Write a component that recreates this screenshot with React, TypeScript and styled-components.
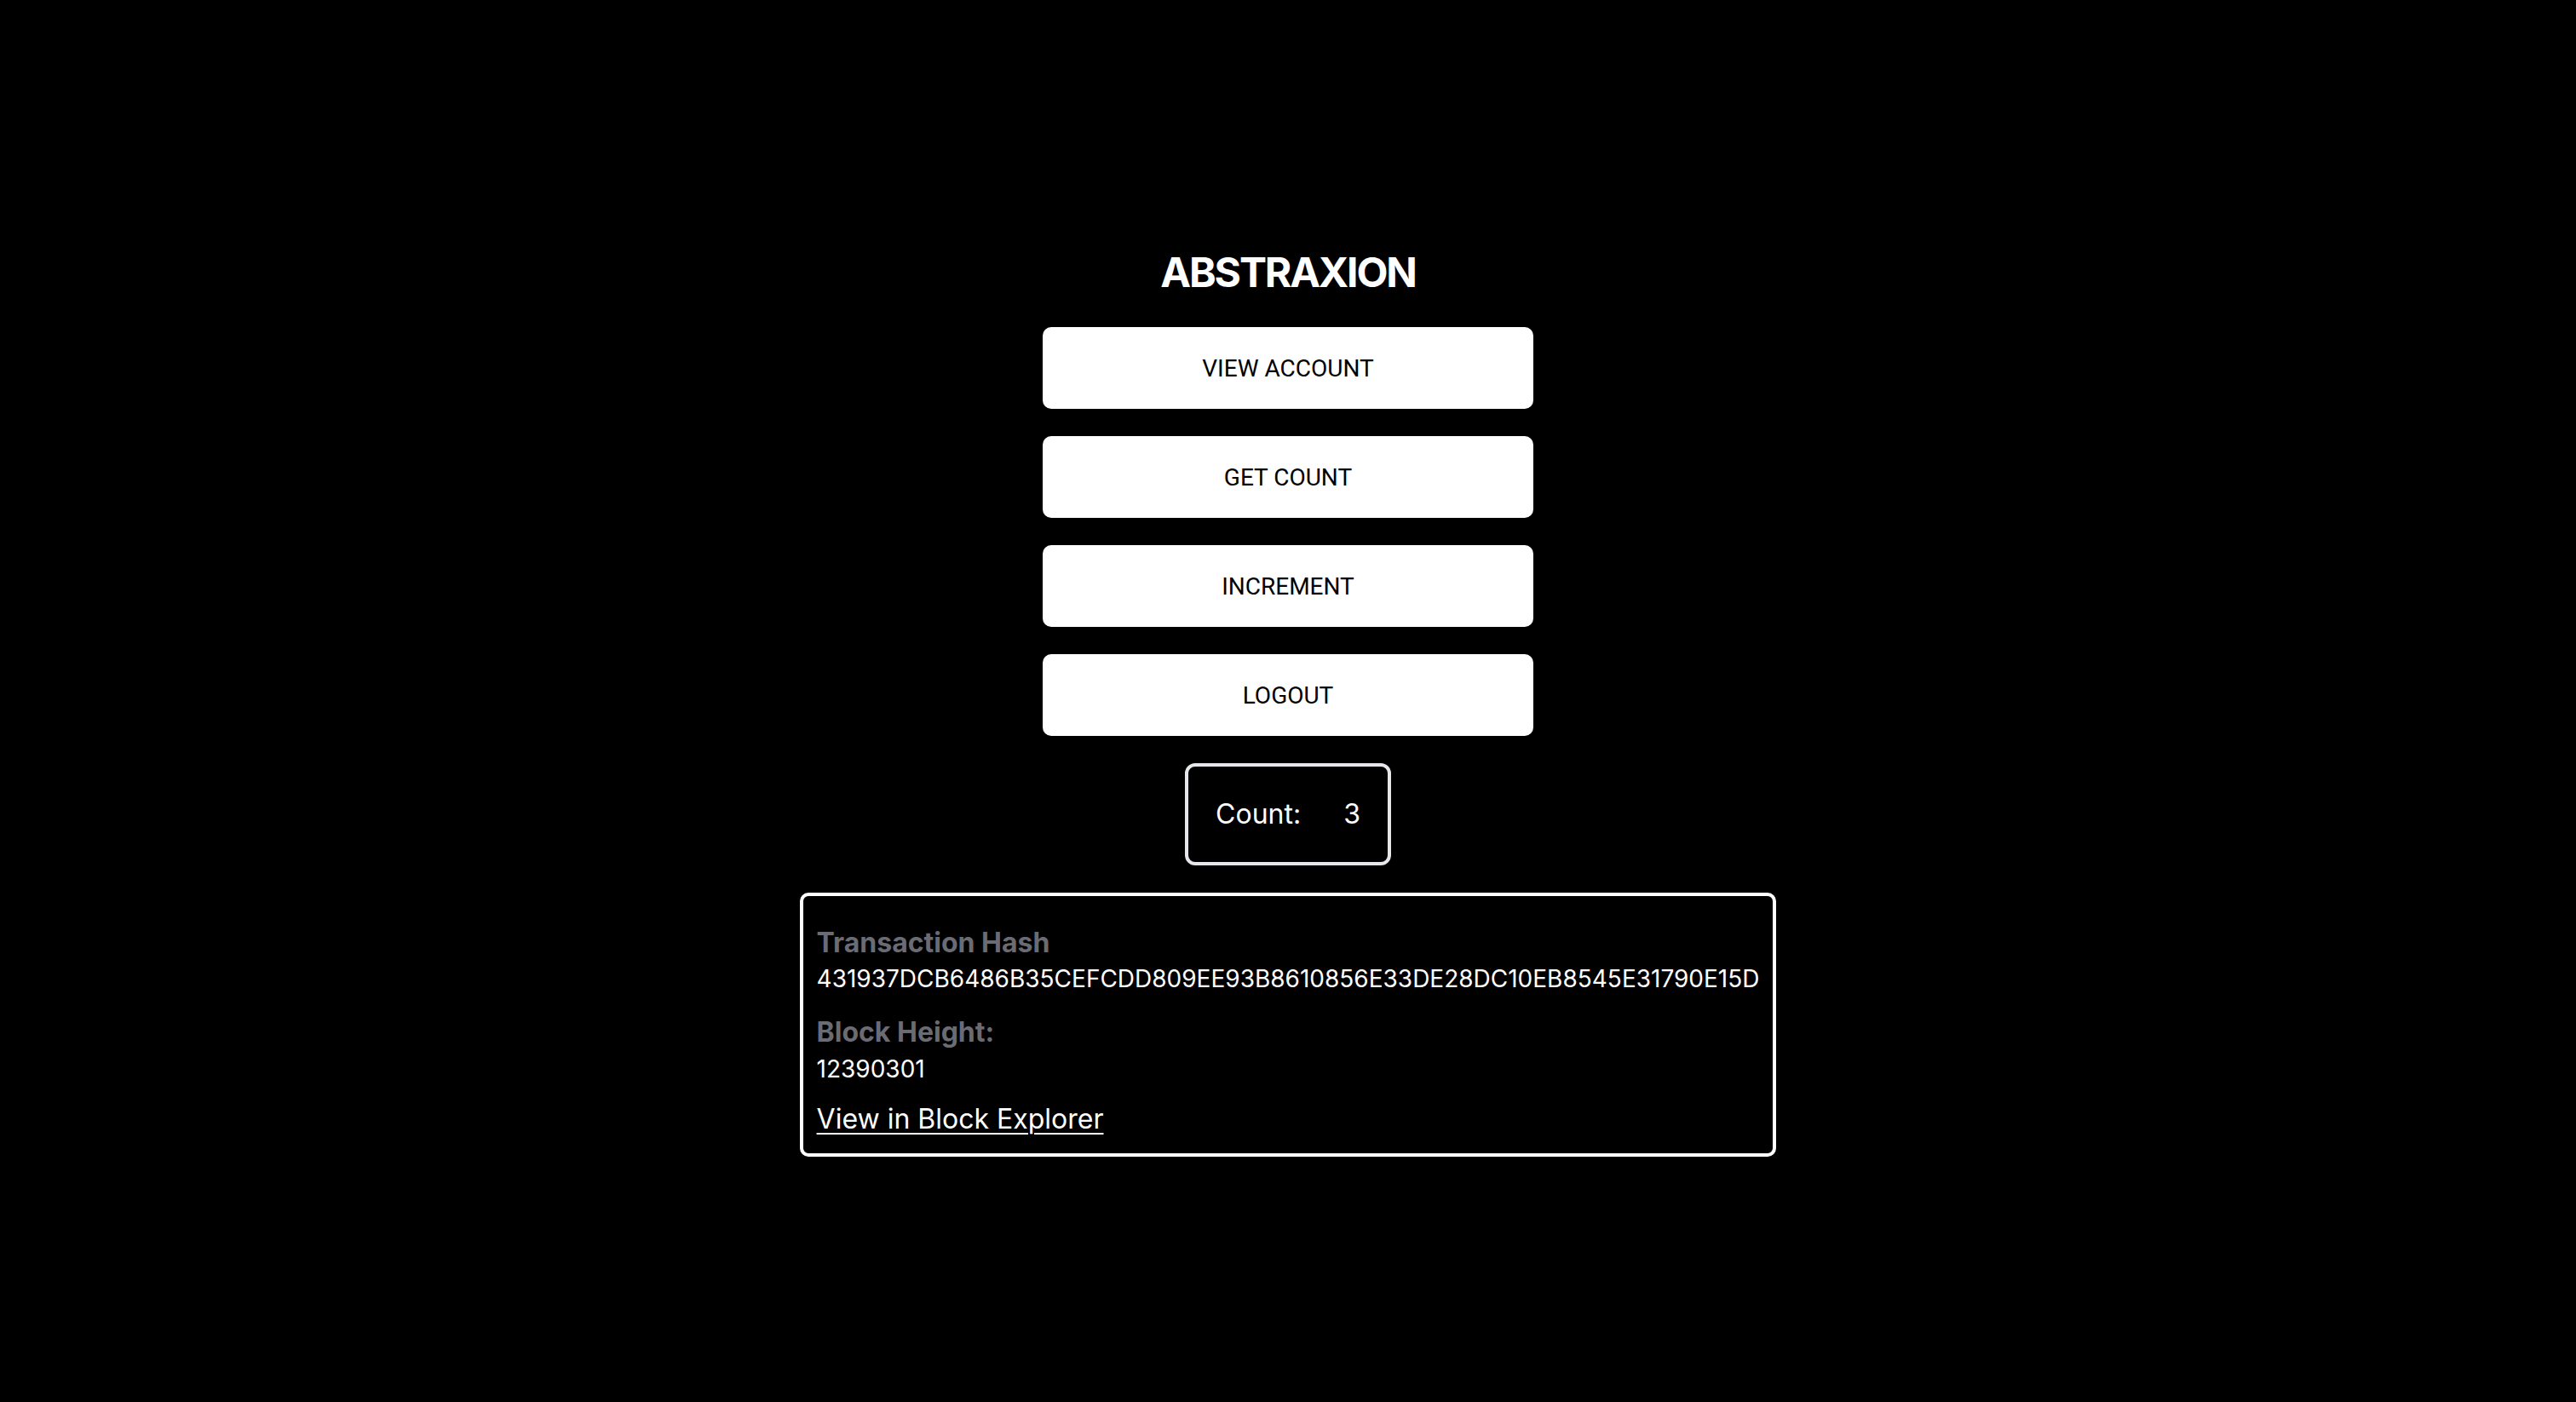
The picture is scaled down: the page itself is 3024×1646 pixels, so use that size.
import styled, { createGlobalStyle } from "styled-components";

// styles

const GlobalStyle = createGlobalStyle`
  html, body {
    margin: 0;
    padding: 0;
    background: #000;
  }
  * {
    box-sizing: border-box;
  }
`;

const Main = styled.main`
  min-height: 100vh;
  display: flex;
  flex-direction: column;
  align-items: center;
  justify-content: center;
  gap: 32px;
  background: #000;
  color: #fff;
  font-family: Inter, "Noto Sans", sans-serif;
`;

const Title = styled.h1`
  margin: 0;
  font-size: 48px;
  line-height: 64px;
  font-weight: 700;
  letter-spacing: -0.045em;
  color: #fff;
`;

const Button = styled.button`
  width: 576px;
  height: 96px;
  border: none;
  border-radius: 10px;
  background: #fff;
  color: #000;
  font-family: Roboto, "Liberation Sans", sans-serif;
  font-size: 28px;
  font-weight: 400;
  text-transform: uppercase;
  cursor: pointer;
`;

const CountBox = styled.div`
  display: flex;
  align-items: center;
  gap: 50px;
  padding: 32px;
  border: 4px solid #e5e7eb;
  border-radius: 12px;
  font-size: 32px;
  line-height: 48px;
`;

const TxBox = styled.div`
  display: flex;
  flex-direction: column;
  align-items: flex-start;
  padding: 33px 16px 16px;
  border: 4px solid #fff;
  border-radius: 10px;
`;

const Label = styled.p<{ $gap?: number }>`
  margin: ${(p) => p.$gap ?? 0}px 0 0;
  font-size: 32px;
  line-height: 44px;
  font-weight: 700;
  color: #6b6b74;
`;

const Value = styled.p<{ $gap?: number }>`
  margin: ${(p) => p.$gap ?? 0}px 0 0;
  font-size: 28px;
  line-height: 40px;
  color: #fff;
`;

const ExplorerLink = styled.a`
  margin-top: 15px;
  font-size: 32px;
  line-height: 48px;
  color: #fff;
  text-decoration: underline;
  text-underline-offset: 5px;
  text-decoration-thickness: 2px;
`;

// main app

const actions = ["View account", "Get count", "Increment", "Logout"];

export default function App() {
  return (
    <>
      <GlobalStyle />
      <Main>
        <Title>ABSTRAXION</Title>
        {actions.map((label) => (
          <Button key={label}>{label}</Button>
        ))}
        <CountBox>
          <span>Count:</span>
          <span>3</span>
        </CountBox>
        <TxBox>
          <Label>Transaction Hash</Label>
          <Value>431937DCB6486B35CEFCDD809EE93B8610856E33DE28DC10EB8545E31790E15D</Value>
          <Label $gap={21}>Block Height:</Label>
          <Value $gap={1}>12390301</Value>
          <ExplorerLink href="#">View in Block Explorer</ExplorerLink>
        </TxBox>
      </Main>
    </>
  );
}
